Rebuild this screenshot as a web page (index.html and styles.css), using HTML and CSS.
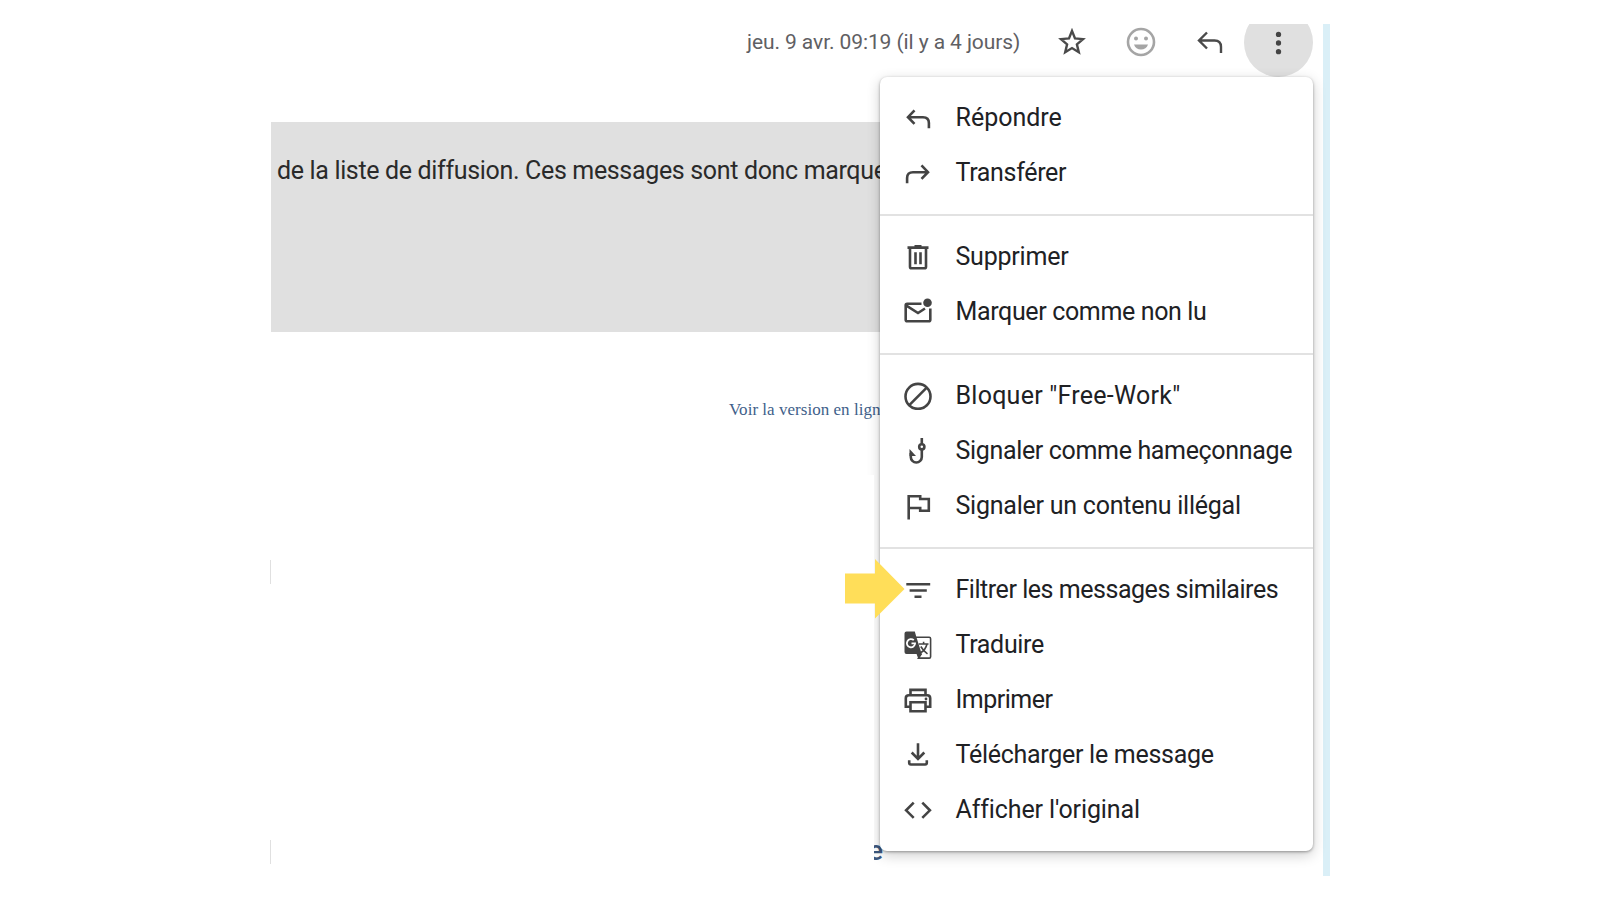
FILE: index.html
```html
<!DOCTYPE html>
<html lang="fr">
<head>
<meta charset="utf-8">
<title>Message</title>
<link rel="stylesheet" href="styles.css">
</head>
<body>
<div class="window">
  <main class="mail">
    <header class="toolbar">
      <span class="date">jeu. 9 avr. 09:19 (il y a 4 jours)</span>
      <svg class="tool star" viewBox="0 0 28 28"><path d="M14 2.900l3 7.500 8 .7-6.100 5.300 1.900 7.900-6.800-4.200-6.800 4.200 1.900-7.900L3 11.100l8-.7z"/></svg>
      <svg class="tool smile" viewBox="0 0 30 30"><circle cx="15" cy="15" r="13"/><g class="solid"><circle cx="10" cy="11.500" r="2"/><circle cx="20" cy="11.500" r="2"/><path d="M8 17.500h14c-1 3.300-3.700 5-7 5s-6-1.700-7-5z"/></g></svg>
      <svg class="tool reply" viewBox="0 0 28 28"><path d="M11 4.500L3 12.500l8 8M3 12.500h15.500q6.500 0 6.500 6.500v6"/></svg>
      <span class="more"><svg viewBox="0 0 68 68"><circle cx="34" cy="26" r="2.600"/><circle cx="34" cy="34.500" r="2.600"/><circle cx="34" cy="43" r="2.600"/></svg></span>
    </header>
    <section class="notice"><p>de la liste de diffusion. Ces messages sont donc marque</p></section>
    <a class="online">Voir la version en lign</a>
    <section class="sheet"><i class="tick"></i><i class="tick"></i></section>
    <span class="clipped">e</span>
  </main>
  <aside class="rail"></aside>

  <nav class="menu">
    <ul>
      <li><svg viewBox="0 0 28 28"><path d="M10.500 6.300L4 13.200l6.500 6.700M4 13.200h15q5.900 0 5.900 5.800v5.300"/></svg><span class="t1">Répondre</span></li>
      <li><svg viewBox="0 0 28 28"><path d="M17.500 6.300l6.500 6.900-6.500 6.700M24 13.200H9q-5.900 0-5.900 5.800v5.300"/></svg><span class="t2">Transférer</span></li>
    </ul>
    <ul>
      <li><svg viewBox="0 0 28 28"><path d="M3.500 4.600h21M10.500 3.200h7M6 5v18.700q0 1.600 1.600 1.600h12.800q1.600 0 1.600-1.600V5M11.500 9.300v12M16.500 9.300v12"/></svg><span class="t3">Supprimer</span></li>
      <li><svg viewBox="0 0 28 28"><path d="M17.500 5.700H3.200q-1.500 0-1.500 1.500v14.600q0 1.500 1.500 1.500h21.600q1.500 0 1.500-1.500V10.500M2 7.300l12 7.700 7-4.500"/><circle class="solid" cx="23.500" cy="4.800" r="4.300"/></svg><span class="t4">Marquer comme non lu</span></li>
    </ul>
    <ul>
      <li><svg viewBox="0 0 28 28"><circle cx="14" cy="14.400" r="12.500"/><path d="M5.300 23.200L22.700 5.600"/></svg><span class="t5">Bloquer "Free-Work"</span></li>
      <li><svg viewBox="0 0 28 28"><path d="M17.800 1v6M17.800 12.500v7.500a5.500 5.500 0 0 1-11 0v-4"/><circle cx="17.800" cy="9.800" r="2.600"/><path class="solid" d="M5.500 12l6.500 7H5.500z"/></svg><span class="t6">Signaler comme hameçonnage</span></li>
      <li><svg viewBox="0 0 28 28"><path d="M4.700 27.500V4.200h11.500V7H24.800v11.800H16.200V16H4.700"/></svg><span class="t7">Signaler un contenu illégal</span></li>
    </ul>
    <ul>
      <li><svg viewBox="0 0 28 28"><path d="M2.300 8.200h23.900M5.600 14.500h17.200M10.500 20.800h7"/></svg><span class="t8">Filtrer les messages similaires</span></li>
      <li><svg viewBox="0 0 28 28"><path class="thin" d="M12 6.300h13.200q1.400 0 1.400 1.400v18q0 1.400-1.400 1.400H14.500l3-4.500"/><path class="solid" d="M2.500.5h8.300l1.500 5.300L17.700 23l-3.400 4.700-1.700-4.700H2.500Q.5 23 .5 21V2.500Q.5.5 2.500.5z"/><path class="light" d="M9.800 9.200a4.100 4.100 0 1 0 1.300 3.100H7.500"/><path class="thin" d="M14.800 13h9.700M19.600 10.700V13M23 13q-1.500 6-6 8.500M16.800 15.500q2.500 4.500 6.700 7.300"/></svg><span class="t9">Traduire</span></li>
      <li><svg viewBox="0 0 28 28"><path d="M6.500 8.800V3.900h15v4.900M6.500 20.700H1.800v-8.500q0-3 3-3h18.400q3 0 3 3v8.500h-4.700M6.500 16.200h15v9.100h-15z"/><circle class="solid" cx="22" cy="13" r="1.400"/></svg><span class="t10">Imprimer</span></li>
      <li><svg viewBox="0 0 28 28"><path d="M14 2.300v15M7.700 11.500L14 17.800l6.300-6.300M5.200 19.300v2.500q0 1.700 1.700 1.700h14.200q1.700 0 1.700-1.700v-2.500"/></svg><span class="t11">Télécharger le message</span></li>
      <li><svg viewBox="0 0 28 28"><path d="M9.700 6.700l-7.600 7.600 7.600 7.600M18.300 6.700l7.600 7.600-7.600 7.600"/></svg><span class="t12">Afficher l'original</span></li>
    </ul>
  </nav>
  <svg class="pointer" viewBox="0 0 60 60"><path d="M0 14.500h30V0l29.500 30L30 59.500V44.500H0z"/></svg>
</div>
</body>
</html>
```
FILE: styles.css
```css
* { box-sizing: border-box; }
body { margin: 0; background: #fff; font-family: Roboto, "Liberation Sans", sans-serif; }
.window { position: relative; display: flex; width: 1600px; height: 900px; padding: 24px 0 0 270px; overflow: hidden; }
.mail { display: flex; flex-direction: column; width: 1053px; height: 852px; padding-left: 1px; }
.rail { width: 6.5px; height: 852px; background: #daeff7; }

.toolbar { display: flex; align-items: flex-start; height: 97.5px; padding-left: 476px; overflow: hidden; }
.date { width: 311px; padding-top: 5px; color: #5f6063; font-size: 21px; line-height: 26px; letter-spacing: -.09px; white-space: nowrap; }
.tool { fill: none; stroke: #4a4a4a; stroke-width: 2.4; }
.star { width: 28px; height: 28px; margin: 4px 41px 0 0; }
.smile { width: 30px; height: 30px; margin: 3px 40px 0 -1px; stroke: #a5a5a5; stroke-width: 2.6; }
.smile .solid { fill: #a5a5a5; stroke: none; }
.reply { width: 28px; height: 28px; margin-top: 4px; }
.more { width: 69px; height: 69px; margin: -16px 0 0 20px; border-radius: 50%; background: #e0e0e0; fill: #444; }
.more svg { display: block; }

.notice { width: 615px; height: 210.5px; padding: 33.5px 0 0 6px; background: #e0e0e0; }
.notice p { margin: 0; color: #2a2a2a; font-size: 25px; line-height: 32px; letter-spacing: -.34px; white-space: nowrap; }
.online { margin: 68px 0 0 458px; color: #3f5f8a; font-family: "Liberation Serif", serif; font-size: 17px; line-height: 20px; letter-spacing: .03px; white-space: nowrap; }
.sheet { position: relative; z-index: 2; display: flex; flex-direction: column; justify-content: space-between; flex: none; width: 604px; height: 389px; margin: 55px 0 0 -1px; padding: 85px 0 0; background: #fff; }
.tick { width: 1px; height: 24px; background: #e0e0e0; }
.clipped { display: flex; flex: none; justify-content: flex-end; width: 12px; height: 28px; margin: -27px 0 0 600px; color: #3c587e; font-size: 28px; font-weight: 500; line-height: 28px; }

.menu { position: absolute; left: 880px; top: 77px; z-index: 1; width: 432.5px; height: 774px; border-radius: 7px; background: #fff; box-shadow: 0 1px 3px rgba(0,0,0,.35), 0 4px 14px rgba(0,0,0,.2); }
.menu ul { margin: 0; padding: 13px 0 14px; list-style: none; }
.menu ul + ul { border-top: 2px solid #e2e2e2; }
.menu li { display: flex; align-items: center; height: 55px; padding-left: 23.5px; color: #202124; font-size: 25px; white-space: nowrap; }
.menu svg { flex: none; width: 28px; height: 28px; margin-right: 24px; fill: none; stroke: #444; stroke-width: 2.6; }
.menu svg .solid { fill: #444; stroke: none; }
.menu svg .thin { stroke-width: 1.6; }
.menu svg .light { stroke: #fff; stroke-width: 1.8; }
.t2 { letter-spacing: -.33px; }
.t3 { letter-spacing: -.22px; }
.t4 { letter-spacing: -.36px; }
.t5 { letter-spacing: .25px; }
.t6 { letter-spacing: -.34px; }
.t7 { letter-spacing: -.24px; }
.t8 { letter-spacing: -.46px; }
.t9 { letter-spacing: -.32px; }
.t10 { letter-spacing: -.5px; }
.t11 { letter-spacing: -.28px; }
.t12 { letter-spacing: -.12px; }

.pointer { position: absolute; left: 844.5px; top: 559px; z-index: 3; width: 60px; height: 60px; fill: #ffde59; }
```
